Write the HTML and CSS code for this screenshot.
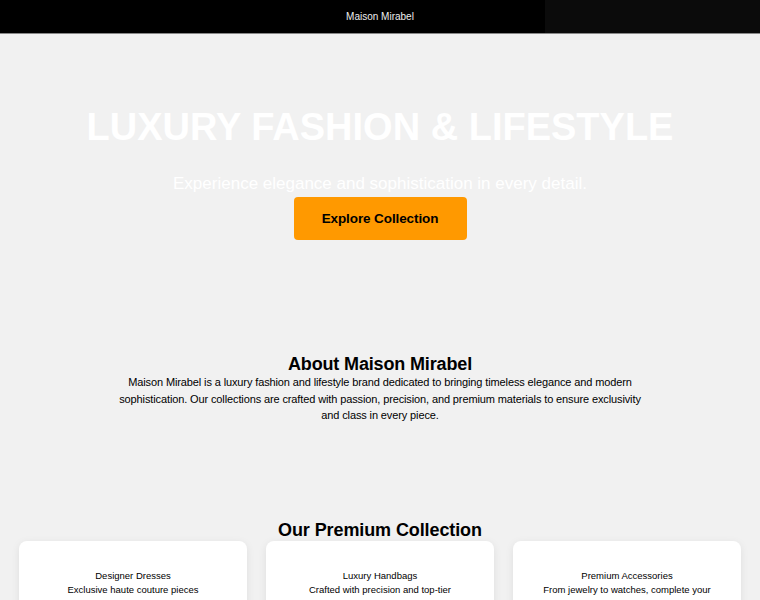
FILE: index.html
```html
<!DOCTYPE html>
<html lang="en">
<head>
    <meta charset="UTF-8">
    <meta name="viewport" content="width=device-width, initial-scale=1.0">
    <title>Maison Mirabel</title>
    <link rel="stylesheet" href="styles.css">
</head>
<body>
    <header class="top-bar">Maison Mirabel</header>

    <section class="hero">
        <h1>LUXURY FASHION &amp; LIFESTYLE</h1>
        <p>Experience elegance and sophistication in every detail.</p>
        <button class="cta">Explore Collection</button>
    </section>

    <section class="about">
        <h2>About Maison Mirabel</h2>
        <p>Maison Mirabel is a luxury fashion and lifestyle brand dedicated to bringing timeless elegance and modern sophistication. Our collections are crafted with passion, precision, and premium materials to ensure exclusivity and class in every piece.</p>
    </section>

    <section class="collection">
        <h2>Our Premium Collection</h2>
        <div class="cards">
            <div class="card">
                <h3>Designer Dresses</h3>
                <p>Exclusive haute couture pieces designed for elegance.</p>
            </div>
            <div class="card">
                <h3>Luxury Handbags</h3>
                <p>Crafted with precision and top-tier materials for style.</p>
            </div>
            <div class="card">
                <h3>Premium Accessories</h3>
                <p>From jewelry to watches, complete your look with luxury.</p>
            </div>
        </div>
    </section>
</body>
</html>
```

FILE: styles.css
```css
body { margin: 0; font-family: "Liberation Sans", Arial, sans-serif; background: #f1f1f1; color: #000; text-align: center; }
.top-bar { background: linear-gradient(to right, #000 71.7%, #0b0b0b 71.7%); color: #eee; font-size: 10px; height: 33px; line-height: 33px; border-bottom: 1px solid #888; }
.hero { padding: 71px 20px 57px; }
.hero h1 { color: #fff; font-size: 38px; margin: 0 0 25px; line-height: 44px; }
.hero p { color: #fff; font-size: 17px; margin: 0; line-height: 20px; }
.cta { background: #ff9900; color: #000; font-family: inherit; font-weight: bold; font-size: 13.5px; letter-spacing: -0.1px; border: none; border-radius: 4px; width: 173px; height: 43px; margin-top: 3px; }
.about { max-width: 530px; margin: 0 auto; padding: 57px 20px 96px; }
.about h2 { font-size: 18px; letter-spacing: -0.15px; margin: 0; line-height: 20px; }
.about p { font-size: 11px; letter-spacing: -0.12px; line-height: 16.5px; margin: 0; }
.collection h2 { font-size: 18px; letter-spacing: -0.1px; margin: 0 0 1px; line-height: 20px; }
.cards { display: flex; gap: 19px; padding: 0 19px; }
.card { flex: 1; background: #fff; border-radius: 8px; box-shadow: 0 2px 8px rgba(0,0,0,0.08); padding: 28px 28px 20px; }
.card h3 { font-size: 9.5px; font-weight: normal; margin: 0; line-height: 14px; }
.card p { font-size: 9.5px; margin: 0; line-height: 14px; }
```
